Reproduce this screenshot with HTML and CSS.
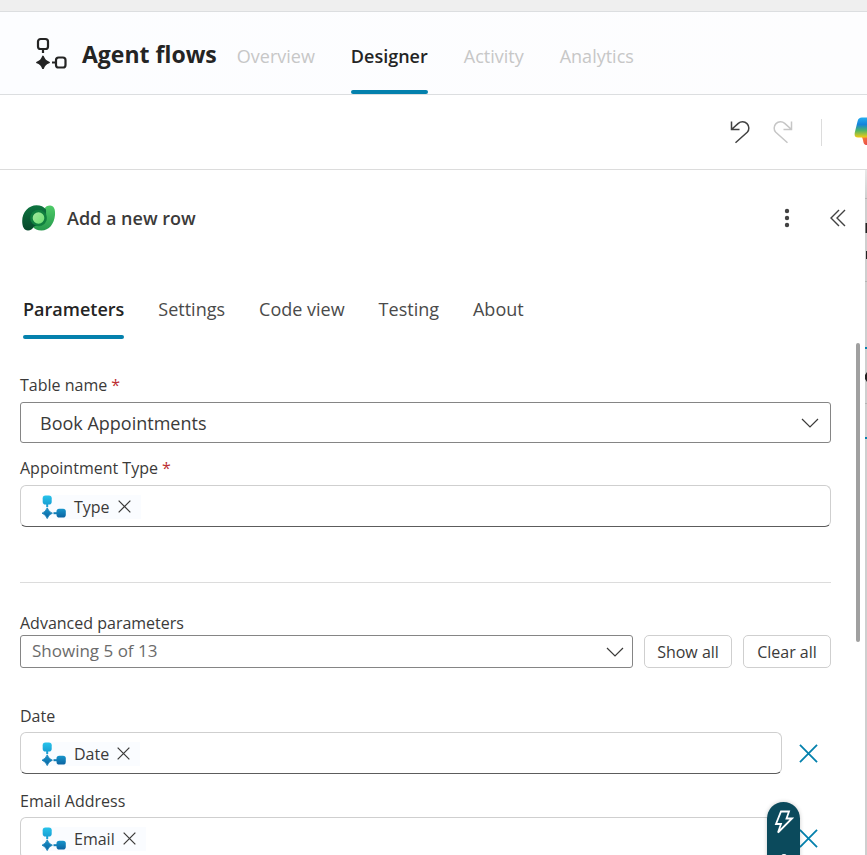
FILE: index.html
```
<!DOCTYPE html>
<html lang="en">
<head>
<meta charset="utf-8">
<meta name="viewport" content="width=device-width, initial-scale=1">
<title>Agent flows - Designer</title>
<link rel="stylesheet" href="styles.css">
</head>
<body>
<svg class="defs" aria-hidden="true">
  <defs>
    <linearGradient id="flow-a" x1="0" y1="0" x2="0" y2="1"><stop offset="0" stop-color="#28c3ea"/><stop offset="1" stop-color="#18a0d4"/></linearGradient>
    <linearGradient id="flow-b" x1="0" y1="0" x2="0" y2="1"><stop offset="0" stop-color="#1795cb"/><stop offset="1" stop-color="#0b62a0"/></linearGradient>
    <symbol id="flow" viewBox="0 0 24 24">
      <path d="M5.200 8v4" stroke="#1b9fd3" stroke-width="2"/>
      <rect x=".7" y=".5" width="9" height="9" rx="2.800" fill="url(#flow-a)"/>
      <path d="M5.200 12.800q1.500 4.200 5.200 5.400q-3.700 1.200-5.200 5.400q-1.500-4.200-5.200-5.400q3.700-1.200 5.200-5.400z" fill="url(#flow-b)" stroke="#127fb8" stroke-width=".8" stroke-linejoin="round"/>
      <path d="M11.500 18.200h4" stroke="#127fb8" stroke-width="2"/>
      <rect x="14.500" y="13.800" width="9.300" height="8.800" rx="2.800" fill="url(#flow-b)"/>
    </symbol>
    <symbol id="chevron" viewBox="0 0 18 10"><path d="M1 1l8 8 8-8" fill="none" stroke="currentColor" stroke-width="1.200"/></symbol>
    <symbol id="cross" viewBox="0 0 20 20"><path d="M1 1l18 18M19 1L1 19" fill="none" stroke="currentColor" stroke-width="1.900"/></symbol>
  </defs>
</svg>

<div class="topstrip"></div>
<header class="header">
  <svg class="brand-icon" viewBox="0 0 32 32" fill="none" stroke="#242424" stroke-width="2.200" aria-hidden="true">
    <rect x="3" y="2" width="10" height="10" rx="2.600"/>
    <path d="M8 12v4M17 25.500h4"/>
    <rect x="21" y="20.500" width="9.500" height="10" rx="2.600"/>
    <path d="M8 19.500q1.500 4.500 6 6q-4.500 1.500-6 6q-1.500-4.500-6-6q4.500-1.500 6-6z" fill="#242424" stroke-width="1.800" stroke-linejoin="round"/>
  </svg>
  <h1 class="brand">Agent flows</h1>
  <nav class="nav">
    <a href="#overview">Overview</a>
    <a href="#designer" class="current" aria-current="page">Designer</a>
    <a href="#activity">Activity</a>
    <a href="#analytics">Analytics</a>
  </nav>
</header>

<div class="toolbar">
  <button class="icon-btn" aria-label="Undo"><svg width="20" height="24" viewBox="0 0 20 24" fill="none" stroke="#424242" stroke-width="1.500"><path d="M1.500 1.500v8h8M1.500 9.500L8.300 3.400a6.300 6.300 0 0 1 8.900 8.900L5.500 22.800"/></svg></button>
  <button class="icon-btn" aria-label="Redo" disabled><svg width="20" height="24" viewBox="0 0 20 24" fill="none" stroke="#c6c6c6" stroke-width="1.500"><path d="M18.500 1.500v8h-8M18.500 9.500L11.700 3.400a6.300 6.300 0 0 0-8.900 8.900L14.500 22.800"/></svg></button>
  <span class="separator"></span>
  <button class="icon-btn copilot" aria-label="Copilot"><svg width="30" height="30" viewBox="0 0 30 30">
    <defs><linearGradient id="cp" x1="0" y1="0" x2="0" y2="1"><stop offset="0" stop-color="#25aef0"/><stop offset=".35" stop-color="#1683dc"/><stop offset=".65" stop-color="#4fb567"/><stop offset="1" stop-color="#f5cc12"/></linearGradient><linearGradient id="cr" x1="0" y1="0" x2="1" y2="1"><stop offset="0" stop-color="#f7803b"/><stop offset="1" stop-color="#e2304f"/></linearGradient></defs>
    <path d="M8 20h14l-2 8h-7c-3 0-3.500-2-4-5z" fill="url(#cr)"/>
    <path d="M8 .5h13l-7 20H4c-3 0-3.800-2-3.200-5L3.500 4.500C4.200 1.500 5.500.5 8 .5z" fill="url(#cp)"/>
  </svg></button>
</div>

<div class="workspace">
  <main class="panel">
    <div class="panel-head">
      <svg class="dataverse" viewBox="0 0 34 26" aria-hidden="true">
        <defs><linearGradient id="dv1" x1="0" y1="0" x2="0" y2="1"><stop offset="0" stop-color="#0e7540"/><stop offset="1" stop-color="#07472b"/></linearGradient><linearGradient id="dv2" x1="0" y1="0" x2="0" y2="1"><stop offset="0" stop-color="#4ecb68"/><stop offset="1" stop-color="#26994c"/></linearGradient><linearGradient id="dv3" x1="0" y1="0" x2="1" y2="1"><stop offset="0" stop-color="#a5e89f"/><stop offset="1" stop-color="#6adf70"/></linearGradient></defs>
        <path d="M22 4C23.500 1.500 25.500.5 28 .5c4 0 5.500 4 5 9.500C32.200 19 27 25.500 19.500 25.500c-4 0-7-1.500-9-4z" fill="url(#dv2)"/>
        <path d="M12 21.500C10.500 24 8.500 25.500 6 25.500 2 25.500.2 21.500.2 16 .2 7 7 .3 14.500.3c4 0 7.500 1.500 9.500 4.200 1 6-4 15-12 17z" fill="url(#dv1)"/>
        <path d="M22 4a10.500 10.500 0 0 1-10 17.500c5 1 10-1 12-5.500 2-4.500 1-9-2-12z" fill="#0b6b3b"/>
        <circle cx="16.500" cy="13" r="8.300" fill="#10803f"/>
        <circle cx="16.500" cy="13" r="5.800" fill="url(#dv3)"/>
      </svg>
      <h2 class="panel-title">Add a new row</h2>
      <button class="icon-btn more" aria-label="More"><svg width="6" height="20" viewBox="0 0 6 20" fill="#424242"><circle cx="3" cy="3" r="2.200"/><circle cx="3" cy="10" r="2.200"/><circle cx="3" cy="17" r="2.200"/></svg></button>
      <button class="icon-btn" aria-label="Collapse"><svg width="16" height="18" viewBox="0 0 16 18" fill="none" stroke="#424242" stroke-width="1.400"><path d="M9 1L1 9l8 8M15 1L7 9l8 8"/></svg></button>
    </div>

    <div class="tabs" role="tablist">
      <button role="tab" class="selected" aria-selected="true">Parameters</button>
      <button role="tab">Settings</button>
      <button role="tab">Code view</button>
      <button role="tab">Testing</button>
      <button role="tab">About</button>
    </div>

    <form class="form">
      <div class="group">
        <label for="table">Table name <span class="required">*</span></label>
        <div class="select-wrap large"><select id="table"><option>Book Appointments</option></select><svg><use href="#chevron"/></svg></div>
      </div>
      <div class="group">
        <label for="type">Appointment Type <span class="required">*</span></label>
        <div class="token-field">
          <span class="token"><svg class="flow"><use href="#flow"/></svg>Type<button type="button" aria-label="Remove Type"><svg><use href="#cross"/></svg></button></span>
          <input id="type" type="text">
        </div>
      </div>

      <hr>

      <div class="group advanced">
        <label for="advanced">Advanced parameters</label>
        <div class="row">
          <div class="select-wrap small"><select id="advanced"><option>Showing 5 of 13</option></select><svg><use href="#chevron"/></svg></div>
          <button type="button" class="button">Show all</button>
          <button type="button" class="button">Clear all</button>
        </div>
      </div>

      <div class="group optional">
        <label for="date">Date</label>
        <div class="row">
          <div class="token-field">
            <span class="token"><svg class="flow"><use href="#flow"/></svg>Date<button type="button" aria-label="Remove Date token"><svg><use href="#cross"/></svg></button></span>
            <input id="date" type="text">
          </div>
          <button type="button" class="remove" aria-label="Remove Date"><svg><use href="#cross"/></svg></button>
        </div>
      </div>
      <div class="group optional">
        <label for="email">Email Address</label>
        <div class="row">
          <div class="token-field">
            <span class="token"><svg class="flow"><use href="#flow"/></svg>Email<button type="button" aria-label="Remove Email token"><svg><use href="#cross"/></svg></button></span>
            <input id="email" type="text">
          </div>
          <button type="button" class="remove" aria-label="Remove Email Address"><svg><use href="#cross"/></svg></button>
        </div>
      </div>
    </form>
    <span class="scroll-thumb"></span>
  </main>
  <div class="canvas-edge">
    <svg width="2" height="300" viewBox="0 0 2 300" aria-hidden="true">
      <path d="M0 28.500h2M0 111.500h2M0 233.500h2" stroke="#b4b4b4"/>
      <path d="M.5 53h1.500v10h-1.500zM1 81h1v8h-1zM0 205l2-3v10l-2-3z" fill="#222"/>
      <path d="M0 178h2M0 268h2" stroke="#0481ad" stroke-width="2"/>
    </svg>
  </div>
  <button class="dynamic" aria-label="Insert dynamic content"><svg width="20" height="24" viewBox="0 0 20 24" fill="none" stroke="#fff" stroke-width="1.800"><path d="M7 1.500h8L12.500 8.500H18L4 22.500 7 14H2z"/></svg><span class="dot"></span></button>
</div>
</body>
</html>
```
FILE: styles.css
```
* { box-sizing: border-box; }

body {
  margin: 0;
  height: 100vh;
  display: flex;
  flex-direction: column;
  overflow: hidden;
  background: #fff;
  color: #3b3a39;
  font: 16px/24px "Open Sans", "Noto Sans", sans-serif;
}

button, input, select {
  margin: 0;
  padding: 0;
  border: 0;
  background: none;
  color: inherit;
  font: inherit;
}

svg { display: block; flex: none; }
.defs { position: absolute; width: 0; height: 0; }

.topstrip {
  flex: none;
  height: 12px;
  background: #efefef;
  border-bottom: 1px solid #dcdee0;
}

.header {
  flex: none;
  display: flex;
  align-items: center;
  height: 83px;
  padding-left: 35px;
  background: linear-gradient(90deg, #fcfdff, #fdfdfe);
  border-bottom: 1px solid #dcdee0;
}
.brand-icon { width: 32px; height: 32px; }
.brand {
  margin: 2px 20px 0 15px;
  color: #242424;
  font-size: 23px;
  font-weight: 700;
}
.nav { display: flex; align-self: stretch; gap: 36px; }
.nav a {
  display: flex;
  align-items: center;
  padding: 12px 0 2px;
  border-bottom: 4px solid transparent;
  color: #c7c7c7;
  font-size: 18px;
  text-decoration: none;
}
.nav .current {
  position: relative;
  color: #242424;
  font-weight: 600;
}
.nav .current::after {
  content: "";
  position: absolute;
  inset: auto 0 -4px;
  height: 4px;
  border-radius: 2px;
  background: #0481ad;
}

.toolbar {
  flex: none;
  display: flex;
  align-items: center;
  justify-content: flex-end;
  gap: 23px;
  height: 75px;
  border-bottom: 1px solid #dcdcdc;
  overflow: hidden;
}
.separator { width: 1px; height: 27px; margin: 0 9px 0 5px; background: #dcdcdc; }
.copilot { margin-right: -17px; }

.workspace {
  position: relative;
  flex: 1;
  min-height: 0;
  display: flex;
  overflow: hidden;
}
.panel { position: relative; flex: 1; min-width: 0; }
.canvas-edge {
  width: 2px;
  background: linear-gradient(#e8e8e8, #cfcfcf 28px, #cfcfcf);
}

.panel-head {
  display: flex;
  align-items: center;
  padding: 32px 19px 32px 22px;
}
.dataverse { width: 34px; height: 26px; }
.panel-title {
  flex: 1;
  margin: 0 0 0 11px;
  font-size: 18px;
  font-weight: 600;
  line-height: 32px;
}
.more { margin-right: 40px; }

.tabs { display: flex; gap: 34px; padding: 20px 23px 0; }
.tabs button {
  padding: 11px 0 14px;
  border-bottom: 4px solid transparent;
  color: #4a4a4a;
  font-size: 18px;
}
.tabs .selected { position: relative; color: #242424; font-weight: 600; }
.tabs .selected::after {
  content: "";
  position: absolute;
  inset: auto 0 -4px;
  height: 4px;
  border-radius: 2px;
  background: #0481ad;
}

.form { padding: 34px 34px 0 20px; }
.group { margin-bottom: 13px; }
.group label { display: block; margin-bottom: 5px; }
.required { color: #bc2f32; }

.select-wrap { flex: 1; display: grid; align-items: center; }
.select-wrap > * { grid-area: 1 / 1; }
.select-wrap select {
  width: 100%;
  appearance: none;
  border: 1px solid #858585;
  border-radius: 3px;
  background: #fff;
}
.select-wrap svg {
  justify-self: end;
  width: 18px;
  height: 10px;
  margin-right: 12px;
  pointer-events: none;
}
.large select { height: 41px; padding-left: 19px; font-size: 18px; }
.small select { height: 33px; padding: 0 0 2px 11px; color: #6b6b6b; font-size: 17px; }
.small svg { margin-right: 9px; }

.token-field {
  flex: 1;
  min-width: 0;
  display: flex;
  align-items: center;
  height: 42px;
  padding: 1px 0 0 21px;
  border: 1px solid #cfcfcf;
  border-bottom-color: #5c5c5c;
  border-radius: 6px;
}
.token-field input { flex: 1; min-width: 0; outline: 0; }
.token { display: flex; align-items: center; padding-right: 10px; background: #fafcff; }
.flow { width: 24px; height: 24px; margin-right: 8px; }
.token button { margin-left: 8px; }
.token button svg { width: 13px; height: 13px; }

hr {
  height: 1px;
  margin: 55px 0 28px;
  border: 0;
  background: #dcdcdc;
}
.row { display: flex; align-items: center; gap: 11px; }
.advanced { margin-bottom: 36px; }
.advanced label { margin-bottom: 0; }
.optional { margin-bottom: 15px; }
.optional label { margin-bottom: 4px; }
.button {
  width: 88px;
  height: 33px;
  padding-top: 1px;
  border: 1px solid #cfcfcf;
  border-radius: 5px;
}
.remove { padding: 0 13px 0 6px; color: #0481ad; }
.remove svg { width: 19px; height: 19px; }

.scroll-thumb {
  position: absolute;
  top: 173px;
  right: 5px;
  width: 4px;
  height: 299px;
  border-radius: 2px;
  background: #a0a0a0;
}
.dynamic {
  position: absolute;
  right: 67px;
  bottom: -60px;
  width: 33px;
  height: 113px;
  display: flex;
  flex-direction: column;
  align-items: center;
  gap: 20px;
  padding-top: 8px;
  border-radius: 17px;
  background: #0b4a5c;
  box-shadow: 0 0 4px #0003;
}
.dot { width: 6px; height: 6px; border-radius: 3px; background: #fff; }
```
